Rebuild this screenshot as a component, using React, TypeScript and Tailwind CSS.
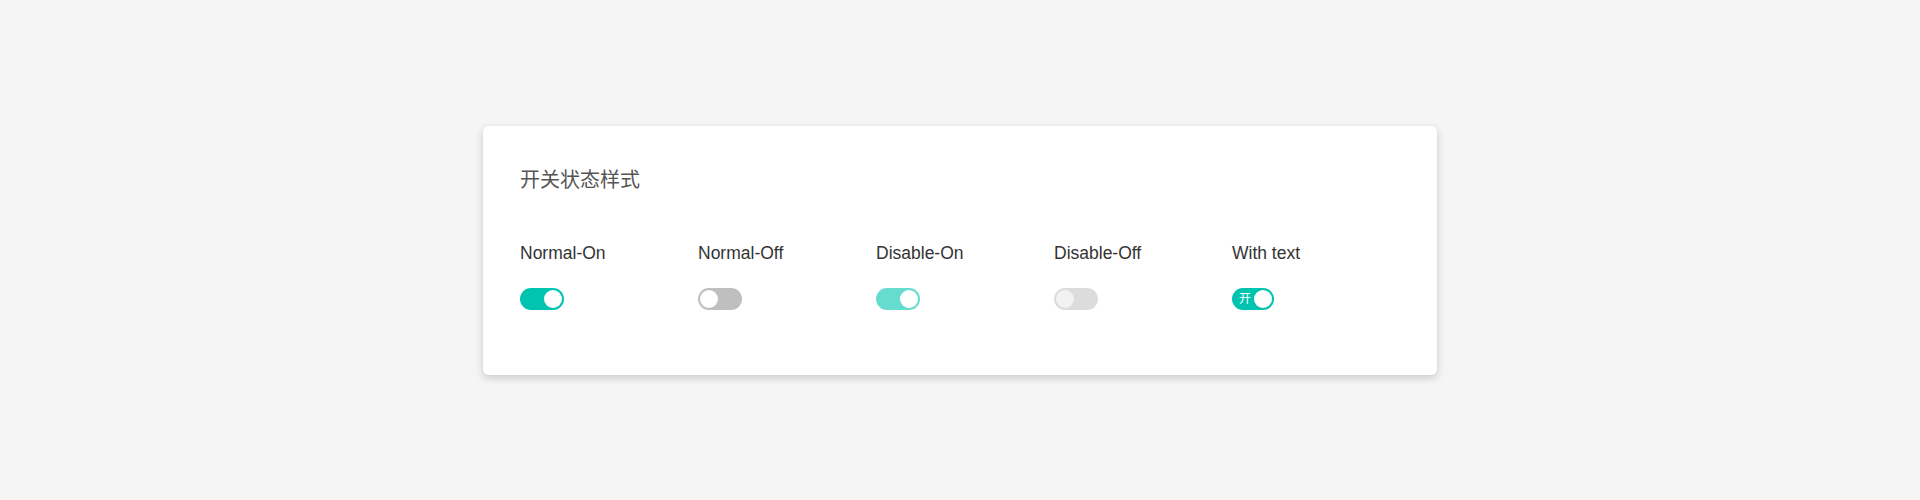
import React from 'react'

type SwitchProps = {
  on: boolean
  disabled?: boolean
  text?: string
}

function Switch({ on, disabled, text }: SwitchProps) {
  let track = 'bg-[#bfbfbf]'
  let knob = 'bg-white'
  if (on && !disabled) track = 'bg-[#00c4b0]'
  if (on && disabled) track = 'bg-[#66dccf]'
  if (!on && disabled) {
    track = 'bg-[#dcdcdc]'
    knob = 'bg-[#f2f2f2]'
  }

  return (
    <div
      className={`relative h-[22px] rounded-full ${text ? 'w-[42px]' : 'w-[44px]'} ${track}`}
    >
      {text && (
        <span className="absolute left-[7px] top-0 leading-[22px] text-[12px] text-white">{text}</span>
      )}
      <span
        className={`absolute top-[2px] h-[18px] w-[18px] rounded-full ${knob} ${on ? 'right-[2px]' : 'left-[2px]'}`}
      />
    </div>
  )
}

const items: { label: string; on: boolean; disabled?: boolean; text?: string }[] = [
  { label: 'Normal-On', on: true },
  { label: 'Normal-Off', on: false },
  { label: 'Disable-On', on: true, disabled: true },
  { label: 'Disable-Off', on: false, disabled: true },
  { label: 'With text', on: true, text: '开' },
]

export default function App() {
  return (
    <div
      className="h-[500px] bg-[#f5f5f5] flex items-center justify-center"
      style={{ fontFamily: '"Liberation Sans", "Noto Sans CJK SC", sans-serif' }}
    >
      <div className="w-[954px] h-[249px] bg-white rounded-[6px] shadow-[0_3px_8px_rgba(0,0,0,0.18)] pl-[37px] pt-[39px]">
        <h2 className="text-[20px] leading-[30px] text-[#555]">开关状态样式</h2>

        <div className="flex mt-[46px]">
          {items.map((item) => (
            <div key={item.label} className="w-[178px]">
              <div className="text-[17.5px] leading-[24px] text-[#333]">{item.label}</div>
              <div className="mt-[23px]">
                <Switch on={item.on} disabled={item.disabled} text={item.text} />
              </div>
            </div>
          ))}
        </div>
      </div>
    </div>
  )
}
